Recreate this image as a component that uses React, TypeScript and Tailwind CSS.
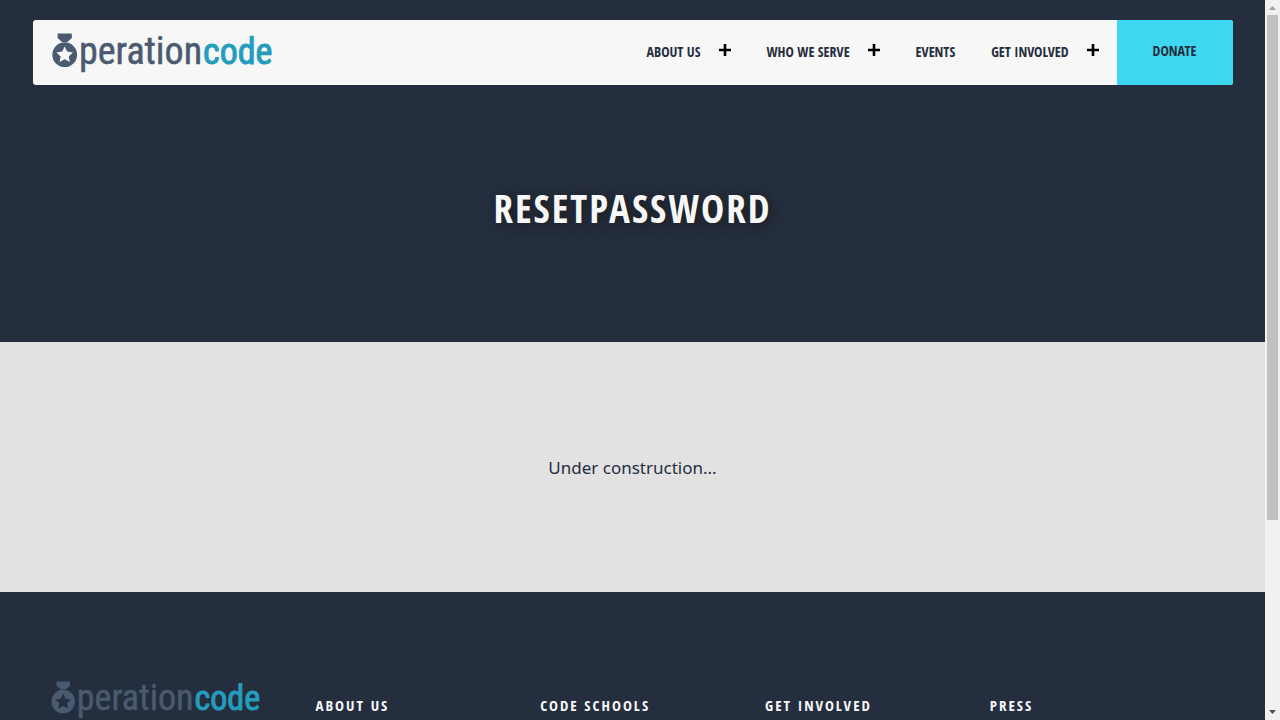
const condensed =
  'font-["Open_Sans_Condensed","Roboto_Condensed","Liberation_Sans",sans-serif]';

type NavItem = { label: string; href: string; expandable: boolean };

const navItems: NavItem[] = [
  { label: 'About Us', href: '#about', expandable: true },
  { label: 'Who We Serve', href: '#serve', expandable: true },
  { label: 'Events', href: '#events', expandable: false },
  { label: 'Get Involved', href: '#involved', expandable: true },
];

const footerColumns = ['About Us', 'Code Schools', 'Get Involved', 'Press'];

function Logo({ className }: { className: string }) {
  return (
    <svg viewBox="0 0 221 39" className={className} role="img" aria-label="Operation Code">
      <g fill="#4a5a71">
        <path d="M5.6 0.5H19.8V5L15.4 9H10L5.6 5Z" />
        <path
          fillRule="evenodd"
          d="M12.7 9.3a12.4 12.4 0 1 0 0 24.8a12.4 12.4 0 1 0 0-24.8ZM12.7 13.4L15.2 18.6L20.9 19.4L16.8 23.4L17.8 29L12.7 26.3L7.6 29L8.6 23.4L4.5 19.4L10.2 18.6Z"
        />
      </g>
      <g strokeLinejoin="round" className='font-["Roboto_Condensed",sans-serif]'>
        <text x="27" y="31" fontSize="38" fill="#4a5a71" stroke="#4a5a71" strokeWidth="0.5">
          peration
        </text>
        <text x="151" y="31" fontSize="36" fill="#249dbd" stroke="#249dbd" strokeWidth="1">
          code
        </text>
      </g>
    </svg>
  );
}

function Plus() {
  return (
    <svg viewBox="0 0 12 12" className="block size-3" aria-hidden="true">
      <path d="M6 0V12M0 6H12" stroke="#000" strokeWidth="2.6" />
    </svg>
  );
}

function Header() {
  return (
    <header className="mx-auto flex w-full max-w-[1200px] items-stretch justify-between rounded-[3px] bg-[#f7f7f7]">
      <a href="#home" className="py-[13px] pl-[19px]">
        <Logo className="block h-[39px] w-[221px] overflow-visible" />
      </a>
      <nav className={`flex items-stretch text-[14px] leading-5 font-bold uppercase ${condensed}`}>
        <ul className="flex items-center pb-0.5">
          {navItems.map((item) => (
            <li key={item.label} className="flex items-center">
              <a href={item.href} className="px-[18px]">
                {item.label}
              </a>
              {item.expandable && (
                <button type="button" aria-label={`Open ${item.label} menu`} className="mr-[18px] pb-1">
                  <Plus />
                </button>
              )}
            </li>
          ))}
        </ul>
        <a href="#donate" className="flex items-center rounded-r-[3px] bg-[#3ed6f0] px-9 pb-1">
          Donate
        </a>
      </nav>
    </header>
  );
}

function ScrollRail() {
  return (
    <div aria-hidden="true" className="flex w-[15px] shrink-0 flex-col items-center bg-[#f1f1f1]">
      <svg viewBox="0 0 15 15" className="block size-[15px]">
        <path d="M4 10L7.5 6L11 10Z" fill="#a3a3a3" />
      </svg>
      <div className="flex w-full flex-1 flex-col px-0.5">
        <div className="h-[73.2%] bg-[#c1c1c1]" />
      </div>
      <svg viewBox="0 0 15 15" className="block size-[15px]">
        <path d="M4 5L7.5 9L11 5Z" fill="#505050" />
      </svg>
    </div>
  );
}

export default function App() {
  return (
    <div className="flex h-screen overflow-hidden text-[#252e3e]">
      <div className="min-w-0 flex-1 overflow-hidden bg-[#e2e2e2]">
        <div className="bg-[#252e3e] pt-5">
          <Header />
          <h1
            className={`pt-[95px] pb-[106px] text-center text-[39px] leading-14 font-bold tracking-[2px] text-[#f7f7f7] uppercase [text-shadow:2px_2px_12px_#1a1a1a] ${condensed}`}
          >
            ResetPassword
          </h1>
        </div>
        <main className='flex h-[250px] items-center justify-center pt-0.5 font-["Noto_Sans",sans-serif] text-[17px]'>
          <p>Under construction...</p>
        </main>
        <footer className="bg-[#252e3e] pt-[89px] pb-24">
          <div className="mx-auto grid max-w-[1200px] grid-cols-[265px_repeat(4,minmax(0,1fr))] px-[18px]">
            <a href="#home">
              <Logo className="block h-[37px] w-[210px] overflow-visible" />
            </a>
            {footerColumns.map((title) => (
              <h2
                key={title}
                className={`pt-3.5 text-[15px] leading-5 font-bold tracking-[2px] whitespace-nowrap text-[#f7f7f7] uppercase ${condensed}`}
              >
                {title}
              </h2>
            ))}
          </div>
        </footer>
      </div>
      <ScrollRail />
    </div>
  );
}
